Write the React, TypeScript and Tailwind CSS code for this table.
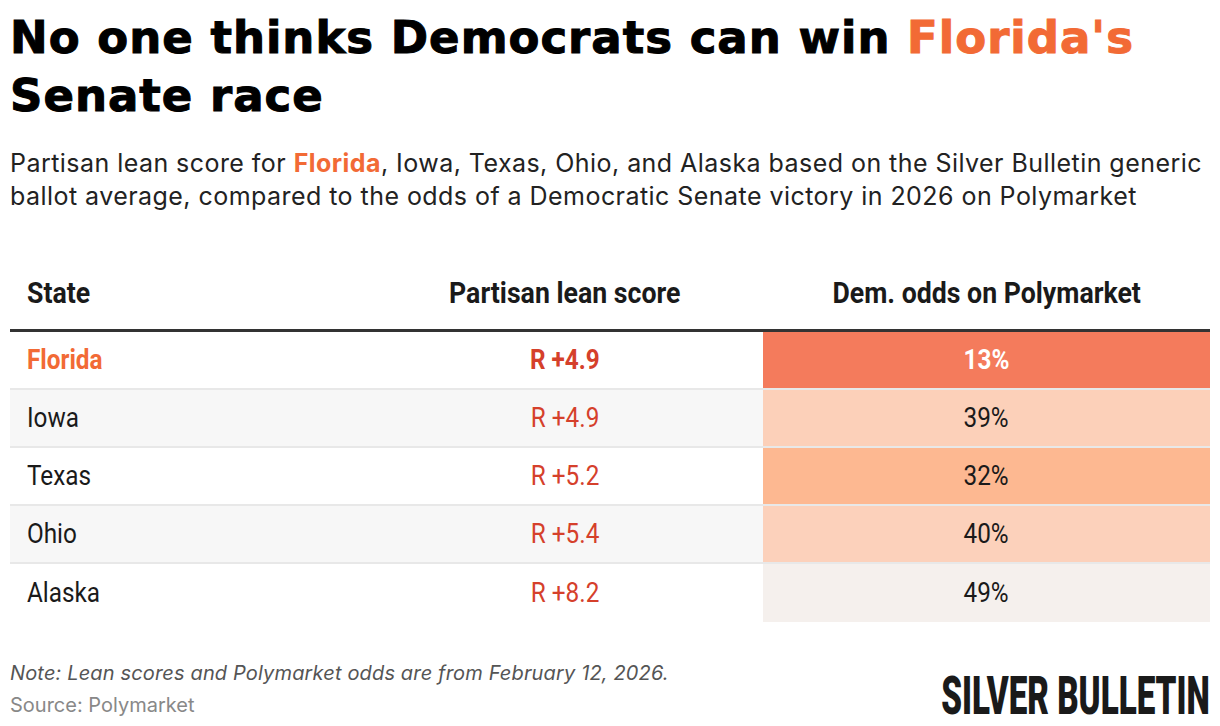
const rows = [
  { state: "Florida", lean: "R +4.9", odds: "13%", cell: "bg-[#f47b5c]", highlight: true },
  { state: "Iowa", lean: "R +4.9", odds: "39%", cell: "bg-[#fcd0b9]", highlight: false },
  { state: "Texas", lean: "R +5.2", odds: "32%", cell: "bg-[#fdb891]", highlight: false },
  { state: "Ohio", lean: "R +5.4", odds: "40%", cell: "bg-[#fcd1bb]", highlight: false },
  { state: "Alaska", lean: "R +8.2", odds: "49%", cell: "bg-[#f5f0ed]", highlight: false },
];

// condensed look: Roboto squeezed horizontally
function Cond({ children, origin = "origin-center", head = false }: { children: React.ReactNode; origin?: string; head?: boolean }) {
  return (
    <span className={`inline-block ${head ? "scale-x-[0.92]" : "scale-x-[0.9]"} ${origin} whitespace-nowrap`}>
      {children}
    </span>
  );
}

export default function App() {
  return (
    <div className="w-[1220px] h-[726px] bg-white px-[10px] pt-[9px] text-[#121212] font-['Inter',sans-serif] overflow-hidden">
      <h1 className="font-['DejaVu_Sans',sans-serif] text-[45px] font-bold leading-[58px] tracking-[1px] text-black [-webkit-text-stroke:1px_currentColor] whitespace-nowrap">
        No one thinks Democrats can win <span className="text-[#f26a35]">Florida's</span>
        <br />
        Senate race
      </h1>
      <p className="mt-[22px] text-[25px] leading-[33px] tracking-[0.45px] text-[#222] whitespace-nowrap">
        Partisan lean score for <span className="font-bold text-[#f26a35]">Florida</span>, Iowa, Texas, Ohio, and Alaska based on the Silver Bulletin generic
        <br />
        ballot average, compared to the odds of a Democratic Senate victory in 2026 on Polymarket
      </p>

      <div className="mt-[46px] font-['Roboto',sans-serif]">
        <div className="grid grid-cols-[357px_396px_447px] h-[73px] items-center border-b-[3px] border-[#333] text-[29px] font-bold text-[#1a1a1a]">
          <div className="pl-[17px]">
            <Cond head origin="origin-left">State</Cond>
          </div>
          <div className="text-center">
            <Cond head>Partisan lean score</Cond>
          </div>
          <div className="text-center">
            <Cond head>Dem. odds on Polymarket</Cond>
          </div>
        </div>
        {rows.map((r, i) => (
          <div
            key={r.state}
            className={`grid grid-cols-[357px_396px_447px] h-[58px] text-[27px] ${i < rows.length - 1 ? "border-b-2 border-[#e8e8e8]" : ""} ${i % 2 === 1 ? "bg-[#f7f7f7]" : "bg-white"}`}
          >
            <div className={`flex items-center pl-[17px] ${r.highlight ? "font-bold text-[#f26a35]" : "text-[#1a1a1a]"}`}>
              <Cond origin="origin-left">{r.state}</Cond>
            </div>
            <div className={`flex items-center justify-center text-[#d5402b] ${r.highlight ? "font-bold" : ""}`}>
              <Cond>{r.lean}</Cond>
            </div>
            <div className={`flex items-center justify-center ${r.cell} ${r.highlight ? "font-bold text-white" : "text-[#1a1a1a]"}`}>
              <Cond>{r.odds}</Cond>
            </div>
          </div>
        ))}
      </div>

      <div className="mt-[35px] flex items-end justify-between">
        <div className="text-[20px] leading-[32px]">
          <p className="italic tracking-[0.15px] text-[#555]">Note: Lean scores and Polymarket odds are from February 12, 2026.</p>
          <p className="text-[#888]">Source: Polymarket</p>
        </div>
        <div className="font-['Roboto',sans-serif] font-black text-[54px] leading-[40px] text-[#1a1a1a] mb-[5px]">
          <span className="inline-block scale-x-[0.615] origin-right whitespace-nowrap">SILVER BULLETIN</span>
        </div>
      </div>
    </div>
  );
}
